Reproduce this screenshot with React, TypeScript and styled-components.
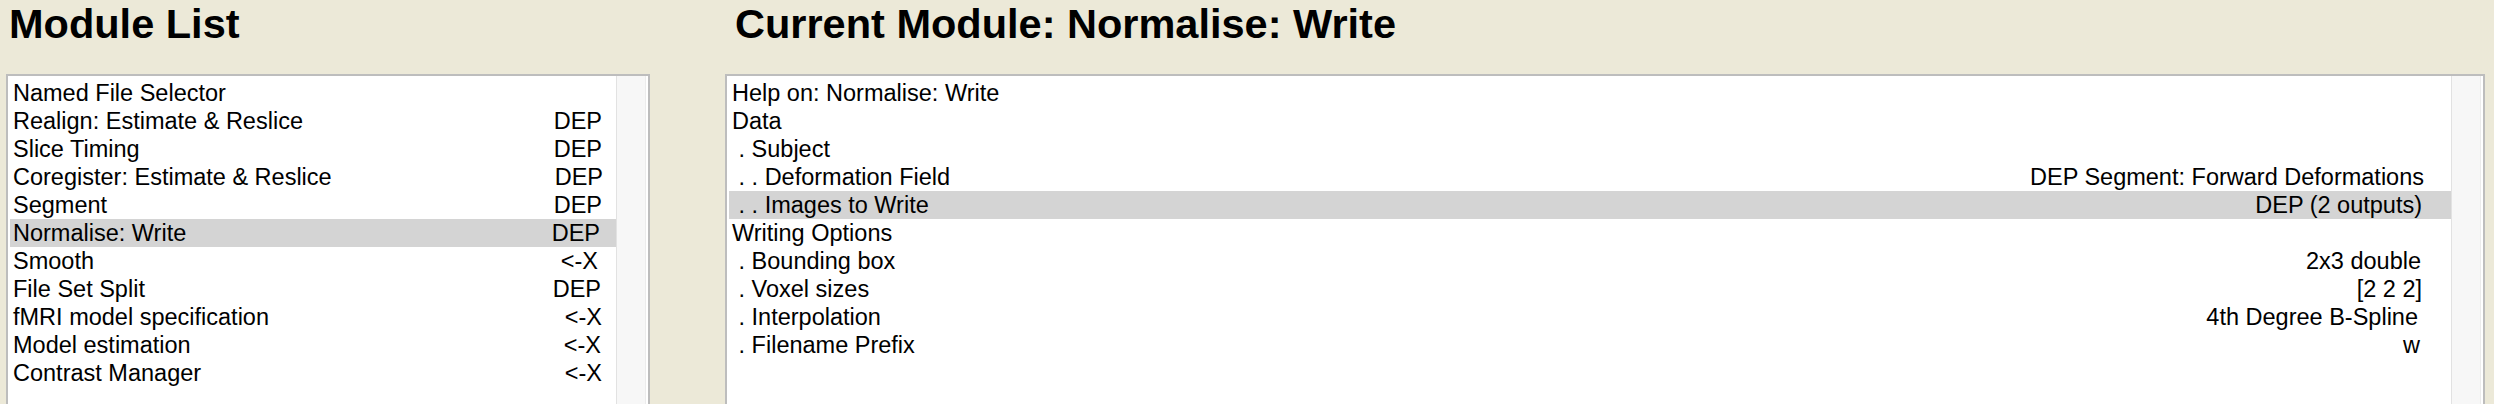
import React from "react";
import styled, { createGlobalStyle } from "styled-components";

const Global = createGlobalStyle`
  html, body {
    margin: 0;
    padding: 0;
    background: #ece9d8;
    overflow: hidden;
  }
  body {
    font-family: "Liberation Sans", Arial, Helvetica, sans-serif;
    color: #000;
  }
`;

const Page = styled.div`
  display: grid;
  grid-template-columns: 644px 1760px;
  column-gap: 75px;
  padding-left: 6px;
  height: 404px;
  overflow: hidden;
`;

const Column = styled.section`
  display: flex;
  flex-direction: column;
  min-width: 0;
`;

const Title = styled.h1<{ $indent: number }>`
  margin: 0;
  height: 74px;
  box-sizing: border-box;
  padding: 3px 0 0 ${(p) => p.$indent}px;
  font-size: 41.5px;
  line-height: 41px;
  font-weight: 700;
  white-space: nowrap;
`;

const Box = styled.div`
  display: flex;
  height: 340px;
  background: #fff;
  border: 2px solid #bdbdbd;
  border-bottom: none;
  overflow: hidden;
`;

const List = styled.ul`
  flex: 1;
  margin: 0;
  padding: 3px 0 0 2px;
  list-style: none;
  min-width: 0;
`;

const Row = styled.li<{ $selected?: boolean; $padRight: number }>`
  display: flex;
  justify-content: space-between;
  align-items: baseline;
  height: 28px;
  padding: 0 ${(p) => p.$padRight}px 0 3px;
  font-size: 23.5px;
  line-height: 29px;
  white-space: pre;
  background: ${(p) => (p.$selected ? "#d4d4d4" : "transparent")};
`;

const Label = styled.span``;

const Value = styled.span<{ $nudge?: number }>`
  margin-right: ${(p) => p.$nudge ?? 0}px;
`;

const Scrollbar = styled.div`
  width: 28px;
  flex: none;
  background: #f7f7f7;
  border-left: 1px solid #e2e2e2;
  border-right: 1px solid #ececec;
  margin-right: 2px;
`;

type Item = { label: string; value?: string; selected?: boolean; nudge?: number };

const modules: Item[] = [
  { label: "Named File Selector" },
  { label: "Realign: Estimate & Reslice", value: "DEP" },
  { label: "Slice Timing", value: "DEP" },
  { label: "Coregister: Estimate & Reslice", value: "DEP", nudge: -1 },
  { label: "Segment", value: "DEP" },
  { label: "Normalise: Write", value: "DEP", selected: true, nudge: 2 },
  { label: "Smooth", value: "<-X", nudge: 4 },
  { label: "File Set Split", value: "DEP", nudge: 1 },
  { label: "fMRI model specification", value: "<-X" },
  { label: "Model estimation", value: "<-X", nudge: 1 },
  { label: "Contrast Manager", value: "<-X" },
];

const options: Item[] = [
  { label: "Help on: Normalise: Write" },
  { label: "Data" },
  { label: " . Subject" },
  { label: " . . Deformation Field", value: "DEP Segment: Forward Deformations" },
  { label: " . . Images to Write", value: "DEP (2 outputs)", selected: true, nudge: 2 },
  { label: "Writing Options" },
  { label: " . Bounding box", value: "2x3 double", nudge: 3 },
  { label: " . Voxel sizes", value: "[2 2 2]", nudge: 2 },
  { label: " . Interpolation", value: "4th Degree B-Spline", nudge: 6 },
  { label: " . Filename Prefix", value: "w", nudge: 4 },
];

function Panel({
  title,
  items,
  padRight,
  indent,
}: {
  title: string;
  items: Item[];
  padRight: number;
  indent: number;
}) {
  return (
    <Column>
      <Title $indent={indent}>{title}</Title>
      <Box>
        <List>
          {items.map((it, i) => (
            <Row key={i} $selected={it.selected} $padRight={padRight}>
              <Label>{it.label}</Label>
              {it.value && <Value $nudge={it.nudge}>{it.value}</Value>}
            </Row>
          ))}
        </List>
        <Scrollbar />
      </Box>
    </Column>
  );
}

export default function App() {
  return (
    <>
      <Global />
      <Page>
        <Panel title="Module List" items={modules} padRight={14} indent={3} />
        <Panel
          title="Current Module: Normalise: Write"
          items={options}
          padRight={27}
          indent={10}
        />
      </Page>
    </>
  );
}
